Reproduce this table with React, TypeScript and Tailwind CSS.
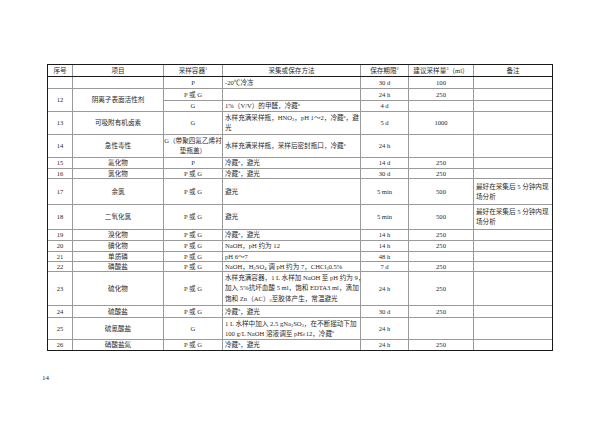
import type { ReactNode } from 'react'

const COLS = 'grid-cols-[24px_90px_58px_137px_47px_64px_78px]'

function Cell({ children, left, className = '' }: { children?: ReactNode; left?: boolean; className?: string }): JSX.Element {
  return (
    <div
      className={`bg-white flex items-center leading-[10px] whitespace-nowrap ${
        left ? 'justify-start text-left px-[2px]' : 'justify-center text-center'
      } ${className}`}
    >
      {children}
    </div>
  )
}

const A = () => <sup className="text-[4.5px]">a</sup>

interface Row {
  no?: string
  item?: string
  span?: boolean
  skipLead?: boolean
  box: ReactNode
  method?: ReactNode
  keep?: string
  amount?: string
  note?: ReactNode
}

const remark = (
  <span>
    最好在采集后 5 分钟内现
    <br />
    场分析
  </span>
)

const rows: Row[] = [
  { no: '', item: '', box: 'P', method: '-20℃冷冻', keep: '30 d', amount: '100' },
  { no: '12', item: '阴离子表面活性剂', span: true, box: 'P 或 G', keep: '24 h', amount: '250' },
  { skipLead: true, box: 'G', method: <span>1%（V/V）的甲醛，冷藏<A /></span>, keep: '4 d' },
  {
    no: '13',
    item: '可吸附有机卤素',
    box: 'G',
    method: (
      <span>
        水样充满采样瓶，HNO<sub className="text-[4.5px]">3</sub>，pH 1～2，冷藏<A />，避
        <br />光
      </span>
    ),
    keep: '5 d',
    amount: '1000',
  },
  {
    no: '14',
    item: '急性毒性',
    box: (
      <span>
        G（带聚四氟乙烯衬
        <br />
        垫瓶盖）
      </span>
    ),
    method: <span>水样充满采样瓶，采样后密封瓶口，冷藏<A /></span>,
    keep: '24 h',
  },
  { no: '15', item: '氟化物', box: 'P', method: <span>冷藏<A />，避光</span>, keep: '14 d', amount: '250' },
  { no: '16', item: '氯化物', box: 'P 或 G', method: <span>冷藏<A />，避光</span>, keep: '30 d', amount: '250' },
  { no: '17', item: '余氯', box: 'P 或 G', method: '避光', keep: '5 min', amount: '500', note: remark },
  { no: '18', item: '二氧化氯', box: 'P 或 G', method: '避光', keep: '5 min', amount: '500', note: remark },
  { no: '19', item: '溴化物', box: 'P 或 G', method: <span>冷藏<A />，避光</span>, keep: '14 h', amount: '250' },
  { no: '20', item: '碘化物', box: 'P 或 G', method: 'NaOH，pH 约为 12', keep: '14 h', amount: '250' },
  { no: '21', item: '单质磷', box: 'P 或 G', method: 'pH 6～7', keep: '48 h' },
  {
    no: '22',
    item: '磷酸盐',
    box: 'P 或 G',
    method: (
      <span>
        NaOH，H<sub className="text-[4.5px]">2</sub>SO<sub className="text-[4.5px]">4</sub> 调 pH 约为 7，CHCl
        <sub className="text-[4.5px]">3</sub>0.5%
      </span>
    ),
    keep: '7 d',
    amount: '250',
  },
  {
    no: '23',
    item: '硫化物',
    box: 'P 或 G',
    method: (
      <div className="w-full [text-align-last:justify] leading-[10.5px]">
        <div>水样充满容器，1 L 水样加 NaOH 至 pH 约为 9，</div>
        <div>加入 5%抗坏血酸 5 ml，饱和 EDTA3 ml，滴加</div>
        <div className="[text-align-last:left]">
          饱和 Zn（AC）<sub className="text-[4.5px]">2</sub>至胶体产生，常温避光
        </div>
      </div>
    ),
    keep: '24 h',
    amount: '250',
  },
  { no: '24', item: '硫酸盐', box: 'P 或 G', method: <span>冷藏<A />，避光</span>, keep: '30 d', amount: '250' },
  {
    no: '25',
    item: '硫氰酸盐',
    box: 'G',
    method: (
      <div className="w-full">
        <div>
          1 L 水样中加入 2.5 gNa<sub className="text-[4.5px]">2</sub>SO<sub className="text-[4.5px]">3</sub>，在不断摇动下加
        </div>
        <div>
          100 g/L NaOH 溶液调至 pH≥12，冷藏<A />
        </div>
      </div>
    ),
    keep: '24 h',
  },
  { no: '26', item: '硝酸盐氮', box: 'P 或 G', method: <span>冷藏<A />，避光</span>, keep: '24 h', amount: '250' },
]

export default function App(): JSX.Element {
  return (
    <div
      className="w-[600px] h-[424px] bg-white text-[#2a2a2a] text-[6.6px] overflow-hidden"
      style={{ fontFamily: '"Liberation Serif", "Noto Sans CJK SC", serif' }}
    >
      <div className="pt-[64px] pl-[47px]">
        <div className="w-[506px] border border-[#1a1a1a]">
          {/* header */}
          <div className={`grid ${COLS} gap-x-px bg-[#9a9a9a] h-[11px]`}>
            <Cell>序号</Cell>
            <Cell>项目</Cell>
            <Cell>
              <span>采样容器<sup className="text-[4.5px]">1</sup></span>
            </Cell>
            <Cell>采集或保存方法</Cell>
            <Cell>
              <span>保存期限<sup className="text-[4.5px]">2</sup></span>
            </Cell>
            <Cell>
              <span>建议采样量<sup className="text-[4.5px]">3</sup>（ml）</span>
            </Cell>
            <Cell>备注</Cell>
          </div>
          <div className="h-px bg-[#1a1a1a]" />
          {/* body */}
          <div
            className={`grid ${COLS} grid-rows-[11px_11px_10px_22px_22px_10px_9px_25px_24px_10px_10px_9px_9px_33px_11px_21px_10px] gap-px bg-[#9a9a9a]`}
          >
            {rows.map((r, i) => (
              <RowCells key={i} r={r} />
            ))}
          </div>
        </div>
        <div className="mt-[22px] -ml-[5px] text-[7px] text-[#2a2a2a]">14</div>
      </div>
    </div>
  )
}

function RowCells({ r }: { r: Row }): JSX.Element {
  return (
    <>
      {!r.skipLead && <Cell className={r.span ? 'row-span-2' : ''}>{r.no}</Cell>}
      {!r.skipLead && <Cell className={r.span ? 'row-span-2' : ''}>{r.item}</Cell>}
      <Cell>{r.box}</Cell>
      <Cell left>{r.method}</Cell>
      <Cell>{r.keep}</Cell>
      <Cell>{r.amount}</Cell>
      <Cell left>{r.note}</Cell>
    </>
  )
}
